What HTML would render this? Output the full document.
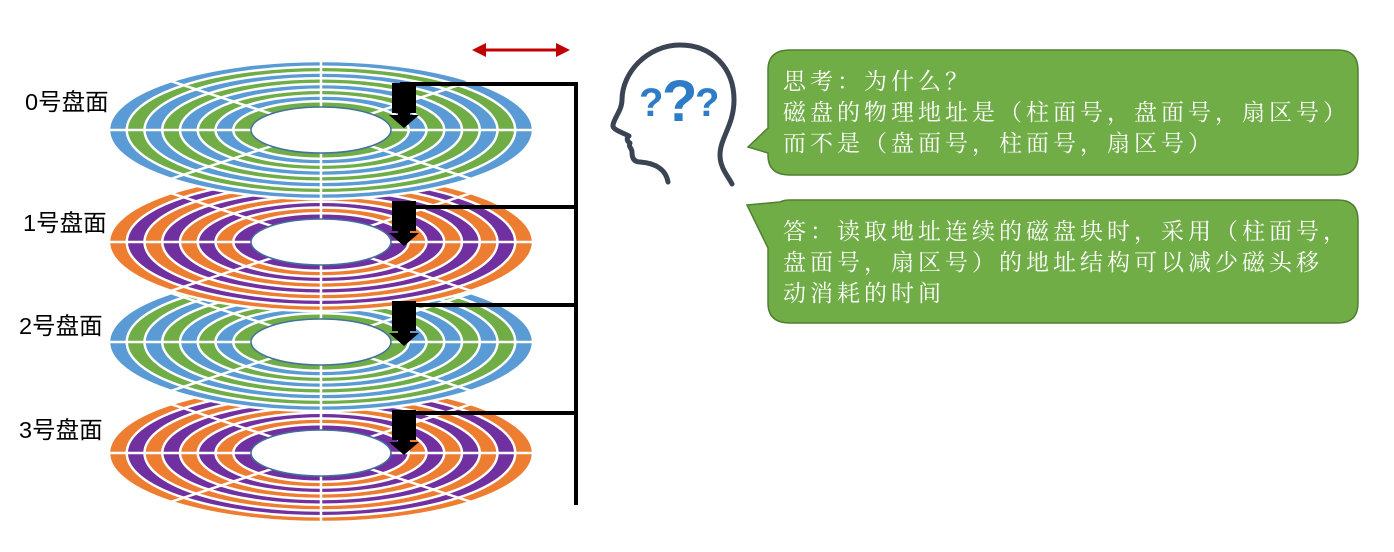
<!DOCTYPE html>
<html><head><meta charset="utf-8"><style>
html,body{margin:0;padding:0;background:#fff;}
body{width:1394px;height:552px;overflow:hidden;position:relative;font-family:"Liberation Sans","Noto Sans CJK SC",sans-serif;}
.lbl{position:absolute;font-size:23.5px;color:#000;font-family:"Liberation Sans","Noto Sans CJK SC",sans-serif;}
.txt{position:absolute;left:783px;color:#fff;font-family:"Liberation Serif","Noto Serif CJK SC",serif;font-size:23px;line-height:31px;letter-spacing:4px;white-space:nowrap;}
</style></head><body>
<svg id="s" width="1394" height="552" style="position:absolute;left:0;top:0">
<g id="disks"></g>
<g fill="none" stroke="#000" stroke-width="4">
<line x1="576" y1="82" x2="576" y2="505"/>
<line x1="400" y1="84" x2="578" y2="84"/>
<line x1="400" y1="207" x2="578" y2="207"/>
<line x1="400" y1="305" x2="578" y2="305"/>
<line x1="400" y1="413" x2="578" y2="413"/>
</g>
<g id="heads" fill="#000"></g>
<g fill="#c00000" stroke="#c00000">
<line x1="480" y1="50" x2="562" y2="50" stroke-width="3"/>
<polygon points="472,50 486,43 486,57" stroke="none"/>
<polygon points="570,50 556,43 556,57" stroke="none"/>
</g>
<path d="M668,182 C666,170 656,163 640,162 C634,162 632,158 632,152 C632,148 628,147 630,143 C626,141 627,137 629,136 C624,133 612,130 613,125 C614,118 622,110 622,100 C622,72 648,45 680,45 C712,45 734,68 734,100 C734,125 720,138 720,155 C720,168 728,176 732,184" fill="none" stroke="#3b4452" stroke-width="5" stroke-linecap="round" stroke-linejoin="round"/>
<text x="639" y="116" fill="#2e7bc6" font-family="Liberation Sans,sans-serif" font-weight="bold" font-size="40">?</text>
<text x="662" y="121" fill="#2e7bc6" font-family="Liberation Sans,sans-serif" font-weight="bold" font-size="58">?</text>
<text x="695" y="116" fill="#2e7bc6" font-family="Liberation Sans,sans-serif" font-weight="bold" font-size="40">?</text>
<path d="M790,50 H1338 Q1358,50 1358,70 V155 Q1358,175 1338,175 H790 Q768,175 768,155 V153 L748,147 L768,128 V70 Q768,50 790,50 Z" fill="#70ad47" stroke="#507e32" stroke-width="1.5"/>
<path d="M790,200 H1338 Q1358,200 1358,220 V303 Q1358,323 1338,323 H790 Q768,323 768,303 V248 L747,205 L780,202 Q784,200 790,200 Z" fill="#70ad47" stroke="#507e32" stroke-width="1.5"/>
</svg>
<div class="lbl" style="left:25px;top:83px">0号盘面</div>
<div class="lbl" style="left:23px;top:204px">1号盘面</div>
<div class="lbl" style="left:19px;top:307px">2号盘面</div>
<div class="lbl" style="left:19px;top:411px">3号盘面</div>
<div class="txt" style="top:66px">思考：为什么？<br>磁盘的物理地址是（柱面号，盘面号，扇区号）<br>而不是（盘面号，柱面号，扇区号）</div>
<div class="txt" style="top:216px">答：读取地址连续的磁盘块时，采用（柱面号，<br>盘面号，扇区号）的地址结构可以减少磁头移<br>动消耗的时间</div>
<script>
var NS="http://www.w3.org/2000/svg";
var g=document.getElementById('disks'),h=document.getElementById('heads');
function el(p,tag,a){var e=document.createElementNS(NS,tag);for(var k in a)e.setAttribute(k,a[k]);p.appendChild(e);return e;}
var disks=[[130,'#5b9bd5','#70ad47'],[242,'#ed7d31','#7030a0'],[342,'#5b9bd5','#70ad47'],[453,'#ed7d31','#7030a0']];
var cx=321,R=212,RY=69,hr=70,hry=23,n=8;
for(var d=3;d>=0;d--){
 var cy=disks[d][0];
 for(var i=0;i<n;i++){
  var rx=R-(R-hr)*i/n, ry=RY-(RY-hry)*i/n;
  el(g,'ellipse',{cx:cx,cy:cy,rx:rx,ry:ry,fill:i%2?disks[d][2]:disks[d][1],stroke:'#fff','stroke-width':2.5});
 }
 for(var a=0;a<4;a++){
  var t=a*Math.PI/4;
  el(g,'line',{x1:cx-R*Math.cos(t),y1:cy-RY*Math.sin(t),x2:cx+R*Math.cos(t),y2:cy+RY*Math.sin(t),stroke:'#fff','stroke-width':2.5});
 }
 el(g,'ellipse',{cx:cx,cy:cy,rx:hr,ry:hry,fill:'#fff',stroke:'#41719c','stroke-width':1.5});
}
[83,201,301,410].forEach(function(y){
 el(h,'rect',{x:392,y:y,width:24,height:30});
 el(h,'rect',{x:398,y:y+29,width:12,height:4});
 el(h,'polygon',{points:'389,'+(y+32)+' 419,'+(y+32)+' 404,'+(y+45)});
});
</script>
</body></html>
